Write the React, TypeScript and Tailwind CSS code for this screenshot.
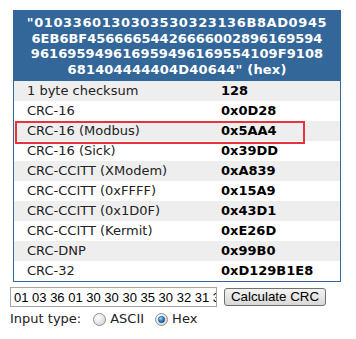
import React from "react";

const rows: [string, string][] = [
  ["1 byte checksum", "128"],
  ["CRC-16", "0x0D28"],
  ["CRC-16 (Modbus)", "0x5AA4"],
  ["CRC-16 (Sick)", "0x39DD"],
  ["CRC-CCITT (XModem)", "0xA839"],
  ["CRC-CCITT (0xFFFF)", "0x15A9"],
  ["CRC-CCITT (0x1D0F)", "0x43D1"],
  ["CRC-CCITT (Kermit)", "0xE26D"],
  ["CRC-DNP", "0x99B0"],
  ["CRC-32", "0xD129B1E8"],
];

const HEX =
  "01 03 36 01 30 30 30 35 30 32 31 36 B8 AD 09 45 6E B6 BF 45 66 66 65 44 26 66 60 02 89 61 69 59 49 61 69 59 49 61 69 59 49 61 69 55 41 09 F9 10 86 81 40 44 44 40 4D 40 64 4";

function Radio({ checked }: { checked: boolean }) {
  return (
    <svg width="13" height="13" viewBox="0 0 13 13" className="shrink-0">
      <defs>
        <radialGradient id={checked ? "rg1" : "rg0"} cx="0.35" cy="0.3" r="0.8">
          <stop offset="0" stopColor="#ffffff" />
          <stop offset="1" stopColor="#d4d4d4" />
        </radialGradient>
        <radialGradient id="dot" cx="0.35" cy="0.3" r="0.8">
          <stop offset="0" stopColor="#9fd4f7" />
          <stop offset="0.6" stopColor="#2a7bc0" />
          <stop offset="1" stopColor="#0f3f6e" />
        </radialGradient>
      </defs>
      <circle cx="6.5" cy="6.5" r="6" fill={checked ? "url(#rg1)" : "url(#rg0)"} stroke="#8e8f8f" strokeWidth="1" />
      {checked && <circle cx="6.5" cy="6.5" r="3.2" fill="url(#dot)" stroke="#1b4f80" strokeWidth="0.6" />}
    </svg>
  );
}

export default function App() {
  return (
    <div
      className="w-[356px] h-[339px] bg-white pt-[10px] pl-[10px]"
      style={{ fontFamily: '"DejaVu Sans", Verdana, sans-serif' }}
    >
      <div className="relative ml-[3px] w-[328px] border border-[#336699]">
        <div className="bg-[#336699] text-white font-bold text-[13px] leading-[15.5px] text-center pt-[4px] pb-[4px]">
          <span className="tracking-[0.6px]">"0103360130303530323136B8AD0945</span>
          <br />
          6EB6BF45666654426666002896169594
          <br />
          <span className="tracking-[0.1px]">961695949616959496169554109F9108</span>
          <br />
          <span className="tracking-[0.2px]">681404444404D40644" (hex)</span>
        </div>
        {rows.map(([k, v], i) => (
          <div
            key={k}
            className={`flex h-[20px] items-center text-[13px] ${i % 2 === 0 ? "bg-[#eeeeee]" : "bg-white"}`}
          >
            <div className="w-[207px] pl-[13px] text-[#222] whitespace-nowrap">{k}</div>
            <div className="font-bold text-black whitespace-nowrap">{v}</div>
          </div>
        ))}
        <div className="absolute left-[1px] top-[110px] w-[290px] h-[23px] border-2 border-[#e8333f]" />
      </div>
      <div className="mt-[5px] flex items-center">
        <input
          readOnly
          defaultValue={HEX}
          className="w-[207px] h-[20px] border border-[#a5a5a5] pl-[3px] pr-0 text-[13px] text-black outline-none"
          style={{ fontFamily: '"Liberation Sans", Arial, sans-serif' }}
        />
        <button
          className="ml-[7px] w-[102px] h-[18px] rounded-[3px] border border-[#707070] bg-gradient-to-b from-[#f3f3f3] via-[#e6e6e6] to-[#d8d8d8] text-[13.33px] leading-[16px] text-black"
          style={{ fontFamily: '"Liberation Sans", Arial, sans-serif' }}
        >
          Calculate CRC
        </button>
      </div>
      <div className="mt-[4px] flex h-[16px] items-center text-[13px] text-[#222]">
        <span>Input type:</span>
        <span className="ml-[12px]">
          <Radio checked={false} />
        </span>
        <span className="ml-[4px]">ASCII</span>
        <span className="ml-[11px]">
          <Radio checked={true} />
        </span>
        <span className="ml-[4px]">Hex</span>
      </div>
    </div>
  );
}
